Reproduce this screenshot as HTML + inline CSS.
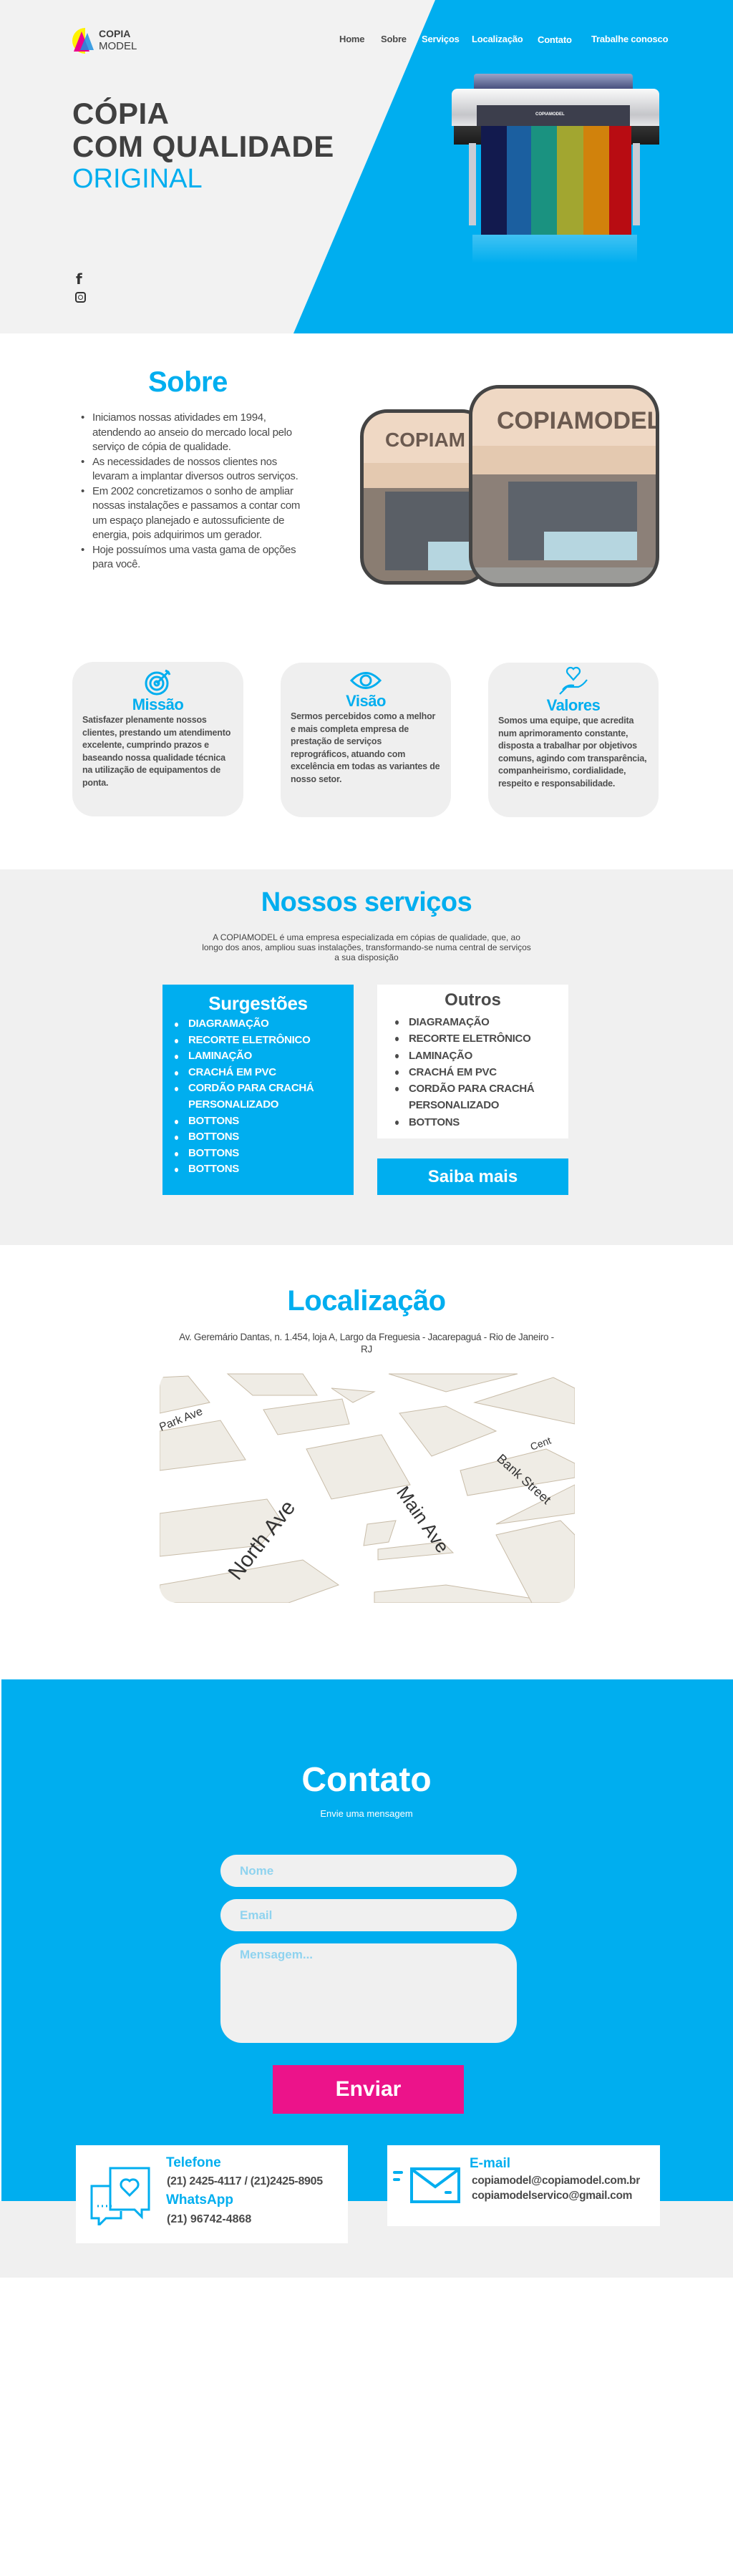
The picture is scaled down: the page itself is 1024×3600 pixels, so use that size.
<!DOCTYPE html>
<html><head><meta charset="utf-8">
<style>
*{margin:0;padding:0;box-sizing:border-box}
body{width:1024px;height:3600px;position:relative;background:#fff;font-family:"Liberation Sans",sans-serif;color:#4a4a4a;overflow:hidden}
.abs{position:absolute}
.hero{position:absolute;left:0;top:0;width:1024px;height:466px;background:#f2f2f2}
.hero .bg{position:absolute;inset:0;background:#00aeef;clip-path:polygon(608px 0,1024px 0,1024px 466px,410px 466px)}
.nav a{position:absolute;top:47px;font-size:13px;font-weight:bold;text-decoration:none;letter-spacing:-0.2px}
.card{position:absolute;background:#efefef;border-radius:30px;text-align:center}
.card h3{color:#00aeef;font-size:22px;font-weight:bold;letter-spacing:-0.5px}
.card p{text-align:left;font-size:12.5px;font-weight:bold;line-height:17.5px;color:#4f4f4f;padding:0 14px 0 14px;letter-spacing:-0.2px}
ul.sv{list-style:none}
ul.sv li{position:relative;padding-left:36px;font-size:15px;font-weight:bold;line-height:22.6px;letter-spacing:-0.3px}
ul.sv li:before{content:"";position:absolute;left:17px;top:9px;width:5px;height:6px;border-radius:50%;background:currentColor}
.inp{position:absolute;left:308px;width:414px;background:#f0f0f0;border-radius:26px;color:#8fd3ef;font-size:17px;font-weight:bold;padding-left:27px}
</style></head><body>

<div class="hero"><div class="bg"></div></div>

<svg class="abs" style="left:100px;top:38px" width="40" height="38" viewBox="0 0 40 38">
<path d="M19 1 A18 18 0 0 0 19 37 Z" fill="#fff200"/>
<polygon points="3,34 14,6 25,34" fill="#ec008c"/>
<polygon points="12,32 22,8 31,32" fill="#1e90e0" opacity="0.85"/>
</svg>
<div class="abs" style="left:138px;top:39px;font-size:14px;font-weight:bold;color:#3d3d3d;line-height:16px">COPIA</div>
<div class="abs" style="left:138px;top:56px;font-size:15px;color:#3d3d3d;line-height:18px">MODEL</div>

<div class="nav">
<a style="left:474px;color:#4a4a4a">Home</a>
<a style="left:532px;color:#4a4a4a">Sobre</a>
<a style="left:589px;color:#fff">Serviços</a>
<a style="left:659px;color:#fff">Localização</a>
<a style="left:751px;color:#fff;top:48px">Contato</a>
<a style="left:826px;color:#fff">Trabalhe conosco</a>
</div>

<div class="abs" style="left:101px;top:136px;font-size:42px;font-weight:bold;color:#404040;line-height:46px;letter-spacing:0.5px">CÓPIA<br>COM QUALIDADE</div>
<div class="abs" style="left:101px;top:228px;font-size:38px;color:#00aeef;line-height:44px">ORIGINAL</div>

<div class="abs" style="left:106px;top:378px;font-size:20px;font-weight:bold;color:#333;font-family:'DejaVu Sans'">f</div>
<div class="abs" style="left:105px;top:408px;width:15px;height:15px;border:2px solid #333;border-radius:4px"><div style="position:absolute;left:2px;top:2px;width:7px;height:7px;border:1.6px solid #333;border-radius:50%"></div></div>

<div class="abs" style="left:662px;top:103px;width:222px;height:24px;background:linear-gradient(#9aa4c8,#3d4474);border-radius:4px 4px 0 0"></div>
<div class="abs" style="left:631px;top:124px;width:290px;height:52px;background:linear-gradient(#fafafa,#c5c6ca 70%,#e6e6e8);border-radius:8px 8px 0 0"></div>
<div class="abs" style="left:666px;top:147px;width:214px;height:30px;background:#3c3e4c"></div>
<div class="abs" style="left:634px;top:176px;width:287px;height:26px;background:linear-gradient(#333,#1a1a1a)"></div>
<div class="abs" style="left:748px;top:157px;font-size:6px;color:#fff;font-weight:bold">COPIAMODEL</div>
<div class="abs" style="left:655px;top:200px;width:10px;height:115px;background:#c9ccd4"></div>
<div class="abs" style="left:884px;top:200px;width:10px;height:115px;background:#c9ccd4"></div>
<div class="abs" style="left:672px;top:176px;width:210px;height:152px;display:flex">
<div style="flex:1.4;background:#121a4e"></div><div style="flex:1.3;background:#1b5fa0"></div><div style="flex:1.4;background:#1a9280"></div><div style="flex:1.4;background:#a2a630"></div><div style="flex:1.4;background:#d1820c"></div><div style="flex:1.2;background:#b80c12"></div>
</div>
<div class="abs" style="left:660px;top:328px;width:230px;height:40px;background:linear-gradient(rgba(255,255,255,0.25),rgba(255,255,255,0))"></div>

<div class="abs" style="left:207px;top:512px;font-size:40px;font-weight:bold;color:#00aeef;letter-spacing:-0.5px">Sobre</div>
<div class="abs" style="left:113px;top:574px;width:315px;font-size:15px;line-height:20.5px;color:#4a4a4a;letter-spacing:-0.3px">
<div style="position:relative;padding-left:16px"><span style="position:absolute;left:0">•</span>Iniciamos nossas atividades em 1994, atendendo ao anseio do mercado local pelo serviço de cópia de qualidade.</div>
<div style="position:relative;padding-left:16px"><span style="position:absolute;left:0">•</span>As necessidades de nossos clientes nos levaram a implantar diversos outros serviços.</div>
<div style="position:relative;padding-left:16px"><span style="position:absolute;left:0">•</span>Em 2002 concretizamos o sonho de ampliar nossas instalações e passamos a contar com um espaço planejado e autossuficiente de energia, pois adquirimos um gerador.</div>
<div style="position:relative;padding-left:16px"><span style="position:absolute;left:0">•</span>Hoje possuímos uma vasta gama de opções para você.</div>
</div>

<div class="abs" style="left:503px;top:572px;width:180px;height:245px;border:5px solid #444;border-radius:38px;overflow:hidden;background:#8a7d72">
 <div style="height:70px;background:#efd8c4;padding:22px 0 0 30px;font-size:28px;font-weight:bold;color:#6b5a50">COPIAM</div>
 <div style="height:35px;background:#e4c9b0"></div>
 <div style="position:absolute;left:30px;top:110px;width:140px;height:110px;background:#5a5f66"></div>
 <div style="position:absolute;left:90px;top:180px;width:70px;height:40px;background:#b6d6e0"></div>
</div>
<div class="abs" style="left:655px;top:538px;width:266px;height:282px;border:5px solid #444;border-radius:42px;overflow:hidden;background:#8c8078">
 <div style="height:80px;background:#efd8c4;padding:26px 0 0 34px;font-size:34px;font-weight:bold;color:#6b5a50;white-space:nowrap">COPIAMODEL</div>
 <div style="height:40px;background:#e4c9b0"></div>
 <div style="position:absolute;left:50px;top:130px;width:180px;height:110px;background:#5d636b"></div>
 <div style="position:absolute;left:100px;top:200px;width:130px;height:40px;background:#b6d6e0"></div>
 <div style="position:absolute;left:0;top:250px;width:266px;height:40px;background:#9b9b98"></div>
</div>

<div class="card" style="left:101px;top:925px;width:239px;height:216px">
<svg width="40" height="40" viewBox="0 0 40 40" style="margin-top:8px" fill="none" stroke="#00aeef" stroke-width="3"><circle cx="18" cy="22" r="15"/><circle cx="18" cy="22" r="9"/><circle cx="18" cy="22" r="3"/><path d="M18 22 L34 6 M30 4 L34 6 L36 10"/></svg>
<h3 style="margin-top:-6px">Missão</h3>
<p>Satisfazer plenamente nossos clientes, prestando um atendimento excelente, cumprindo prazos e baseando nossa qualidade técnica na utilização de equipamentos de ponta.</p>
</div>
<div class="card" style="left:392px;top:926px;width:238px;height:216px">
<svg width="44" height="30" viewBox="0 0 44 30" style="margin-top:10px" fill="none" stroke="#00aeef" stroke-width="3"><path d="M2 15 Q22 -6 42 15 Q22 36 2 15Z"/><circle cx="22" cy="15" r="7"/></svg>
<h3 style="margin-top:-4px">Visão</h3>
<p>Sermos percebidos como a melhor e mais completa empresa de prestação de serviços reprográficos, atuando com excelência em todas as variantes de nosso setor.</p>
</div>
<div class="card" style="left:682px;top:926px;width:238px;height:216px">
<svg width="46" height="42" viewBox="0 0 46 42" style="margin-top:4px" fill="none" stroke="#00aeef" stroke-width="2.2"><path d="M23 20 L15 11 A5 5 0 0 1 23 5 A5 5 0 0 1 31 11Z"/><path d="M4 40 L14 30 L30 30 Q36 28 42 20 M8 34 Q14 26 24 28"/></svg>
<h3 style="margin-top:-4px">Valores</h3>
<p>Somos uma equipe, que acredita num aprimoramento constante, disposta a trabalhar por objetivos comuns, agindo com transparência, companheirismo, cordialidade, respeito e responsabilidade.</p>
</div>

<div class="abs" style="left:0;top:1215px;width:1024px;height:525px;background:#f0f0f0"></div>
<div class="abs" style="left:0;top:1240px;width:1024px;text-align:center;font-size:38px;font-weight:bold;color:#00aeef;letter-spacing:-0.5px">Nossos serviços</div>
<div class="abs" style="left:282px;top:1303px;width:460px;text-align:center;font-size:12px;line-height:14px;color:#444">A COPIAMODEL é uma empresa especializada em cópias de qualidade, que, ao longo dos anos, ampliou suas instalações, transformando-se numa central de serviços a sua disposição</div>
<div class="abs" style="left:227px;top:1376px;width:267px;height:294px;background:#00aeef;color:#fff">
<div style="text-align:center;font-size:26px;font-weight:bold;margin-top:10px;letter-spacing:-0.3px;line-height:32px">Surgestões</div>
<ul class="sv" style="margin-top:2px"><li>DIAGRAMAÇÃO</li><li>RECORTE ELETRÔNICO</li><li>LAMINAÇÃO</li><li>CRACHÁ EM PVC</li><li>CORDÃO PARA CRACHÁ PERSONALIZADO</li><li>BOTTONS</li><li>BOTTONS</li><li>BOTTONS</li><li>BOTTONS</li></ul>
</div>
<div class="abs" style="left:527px;top:1376px;width:267px;height:215px;background:#fff;color:#4a4a4a">
<div style="text-align:center;font-size:24px;font-weight:bold;margin-top:7px;line-height:30px">Outros</div>
<ul class="sv" style="margin-top:4px;padding-left:8px"><li style="line-height:23.3px">DIAGRAMAÇÃO</li><li style="line-height:23.3px">RECORTE ELETRÔNICO</li><li style="line-height:23.3px">LAMINAÇÃO</li><li style="line-height:23.3px">CRACHÁ EM PVC</li><li style="line-height:23.3px">CORDÃO PARA CRACHÁ PERSONALIZADO</li><li style="line-height:23.3px">BOTTONS</li></ul>
</div>
<div class="abs" style="left:527px;top:1619px;width:267px;height:51px;background:#00aeef;color:#fff;text-align:center;font-size:24px;font-weight:bold;line-height:51px">Saiba mais</div>

<div class="abs" style="left:0;top:1796px;width:1024px;text-align:center;font-size:40px;font-weight:bold;color:#00aeef;letter-spacing:-0.5px">Localização</div>
<div class="abs" style="left:250px;top:1860px;width:524px;text-align:center;font-size:13.5px;line-height:17px;color:#444;letter-spacing:-0.3px">Av. Geremário Dantas, n. 1.454, loja A, Largo da Freguesia - Jacarepaguá - Rio de Janeiro - RJ</div>
<svg class="abs" style="left:223px;top:1915px" width="580" height="325" viewBox="0 0 580 325">
<defs><clipPath id="c"><rect width="580" height="325" rx="24"/></clipPath></defs>
<g clip-path="url(#c)">
<rect width="580" height="325" fill="#fff"/>
<g fill="#efece5" stroke="#c8bca8" stroke-width="1">
<polygon points="0,10 40,8 70,45 0,60"/><polygon points="95,5 200,5 220,35 130,35"/><polygon points="240,25 300,30 270,45"/><polygon points="320,5 500,5 400,30"/>
<polygon points="0,85 85,70 120,125 0,140"/><polygon points="145,55 255,40 265,75 165,90"/><polygon points="335,60 400,50 470,85 380,120"/><polygon points="440,45 550,10 580,25 580,75"/>
<polygon points="0,200 150,180 170,210 140,245 0,260"/><polygon points="205,110 310,90 350,160 240,180"/><polygon points="420,140 540,110 580,130 580,150 430,175"/>
<polygon points="0,300 200,265 250,300 180,325 0,325"/><polygon points="305,250 395,240 410,255 305,265"/><polygon points="290,215 330,210 320,240 285,245"/>
<polygon points="300,310 400,300 560,325 300,325"/><polygon points="470,230 560,210 580,230 580,325 520,325"/>
<polygon points="580,160 580,200 470,215"/>
</g>
<g fill="#333" font-family="Liberation Sans">
<text x="110" y="295" font-size="30" transform="rotate(-52 110 295)">North Ave</text>
<text x="330" y="170" font-size="26" transform="rotate(55 330 170)">Main Ave</text>
<text x="470" y="125" font-size="18" transform="rotate(42 470 125)">Bank Street</text>
<text x="2" y="85" font-size="16" transform="rotate(-22 2 85)">Park Ave</text>
<text x="520" y="112" font-size="14" transform="rotate(-20 520 112)">Cent</text>
</g>
</g></svg>

<div class="abs" style="left:2px;top:2347px;width:1022px;height:729px;background:#00aeef"></div>
<div class="abs" style="left:0;top:3076px;width:1024px;height:107px;background:#f0f0f0"></div>
<div class="abs" style="left:0;top:2460px;width:1024px;text-align:center;font-size:48px;font-weight:bold;color:#fff">Contato</div>
<div class="abs" style="left:0;top:2527px;width:1024px;text-align:center;font-size:13px;color:#fff">Envie uma mensagem</div>
<div class="inp" style="top:2592px;height:45px;line-height:45px">Nome</div>
<div class="inp" style="top:2654px;height:45px;line-height:45px">Email</div>
<div class="inp" style="top:2716px;height:139px;padding-top:6px;border-radius:30px">Mensagem...</div>
<div class="abs" style="left:381px;top:2886px;width:267px;height:68px;background:#ec138a;color:#fff;text-align:center;font-size:30px;font-weight:bold;line-height:68px">Enviar</div>

<div class="abs" style="left:106px;top:2998px;width:380px;height:137px;background:#fff"></div>
<svg class="abs" style="left:124px;top:3028px" width="90" height="82" viewBox="0 0 90 82" fill="none" stroke="#00aeef" stroke-width="3"><path d="M30 2 H84 V60 H74 L74 70 L64 60 H30 Z"/><path d="M57 40 L47 30 A7 7 0 0 1 57 20 A7 7 0 0 1 67 30Z"/><path d="M30 27 H4 V72 H14 L14 82 L24 72 H45 V62"/><path d="M12 55 h2 M18 55 h2 M24 55 h2 M30 55 h2"/></svg>
<div class="abs" style="left:232px;top:3012px;font-size:19px;font-weight:bold;color:#00aeef">Telefone</div>
<div class="abs" style="left:233px;top:3040px;font-size:16px;font-weight:bold;color:#4a4a4a;letter-spacing:-0.3px">(21) 2425-4117 / (21)2425-8905</div>
<div class="abs" style="left:232px;top:3064px;font-size:19px;font-weight:bold;color:#00aeef">WhatsApp</div>
<div class="abs" style="left:233px;top:3093px;font-size:16px;font-weight:bold;color:#4a4a4a">(21) 96742-4868</div>

<div class="abs" style="left:541px;top:2998px;width:381px;height:113px;background:#fff"></div>
<svg class="abs" style="left:549px;top:3028px" width="96" height="52" viewBox="0 0 96 52" fill="none" stroke="#00aeef" stroke-width="4"><rect x="26" y="3" width="66" height="46"/><path d="M28 5 L59 28 L90 5"/><path d="M2 8 h10 M2 18 h6" stroke-linecap="round"/><path d="M74 36 h6" stroke-linecap="round"/></svg>
<div class="abs" style="left:656px;top:3013px;font-size:19px;font-weight:bold;color:#00aeef">E-mail</div>
<div class="abs" style="left:659px;top:3037px;font-size:15.5px;font-weight:bold;color:#4a4a4a;line-height:21px;letter-spacing:-0.3px">copiamodel@copiamodel.com.br<br>copiamodelservico@gmail.com</div>

</body></html>
